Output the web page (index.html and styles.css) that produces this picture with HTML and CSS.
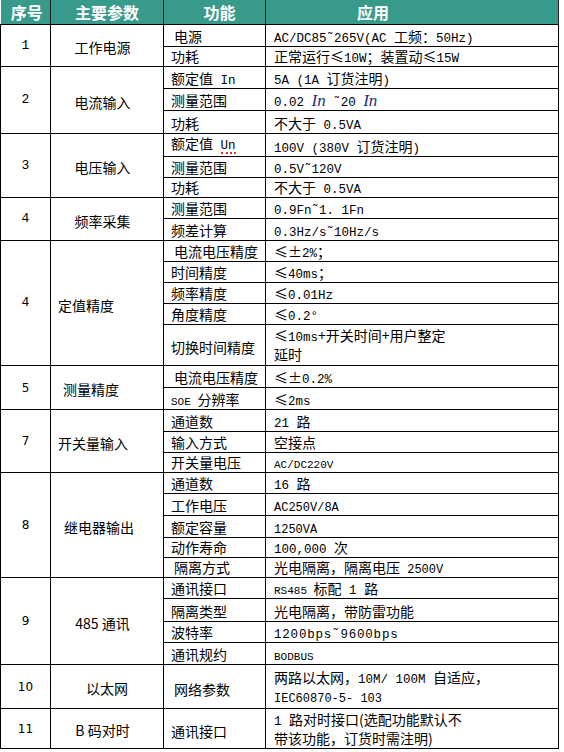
FILE: index.html
```html
<!DOCTYPE html>
<html lang="zh">
<head>
<meta charset="utf-8">
<title>技术参数</title>
<link rel="stylesheet" href="styles.css">
</head>
<body>
<table class="spec">
  <colgroup>
    <col class="c1"><col class="c2"><col class="c3"><col class="c4">
  </colgroup>
  <thead>
    <tr class="head">
      <th class="th-no">序号</th>
      <th>主要参数</th>
      <th class="th-fn">功能</th>
      <th class="th-app">应用</th>
    </tr>
  </thead>
  <tbody>
    <tr class="h22">
      <td rowspan="2" class="no serif">1</td>
      <td rowspan="2" class="name">工作电源</td>
      <td class="fn fn-x">电源</td>
      <td class="app"><span class="en">AC/DC85˜265V(AC </span>工频：<span class="en">50Hz)</span></td>
    </tr>
    <tr class="h20">
      <td class="fn">功耗</td>
      <td class="app">正常运行≤<span class="en">10W</span>；装置动≤<span class="en">15W</span></td>
    </tr>

    <tr class="h22">
      <td rowspan="3" class="no serif">2</td>
      <td rowspan="3" class="name">电流输入</td>
      <td class="fn">额定值<span class="en"> In</span></td>
      <td class="app"><span class="en">5A  (1A </span>订货注明<span class="en">)</span></td>
    </tr>
    <tr class="h22">
      <td class="fn">测量范围</td>
      <td class="app"><span class="en">0.02 </span><span class="math">In</span><span class="en"> ˜20 </span><span class="math">In</span></td>
    </tr>
    <tr class="h23">
      <td class="fn">功耗</td>
      <td class="app">不大于<span class="en"> 0.5VA</span></td>
    </tr>

    <tr class="h23">
      <td rowspan="3" class="no serif">3</td>
      <td rowspan="3" class="name">电压输入</td>
      <td class="fn">额定值<span class="en"> </span><span class="en spell">Un</span></td>
      <td class="app"><span class="en">100V  (380V </span>订货注明<span class="en">)</span></td>
    </tr>
    <tr class="h21">
      <td class="fn">测量范围</td>
      <td class="app"><span class="en">0.5V˜120V</span></td>
    </tr>
    <tr class="h20">
      <td class="fn">功耗</td>
      <td class="app">不大于<span class="en"> 0.5VA</span></td>
    </tr>

    <tr class="h21">
      <td rowspan="2" class="no serif">4</td>
      <td rowspan="2" class="name">频率采集</td>
      <td class="fn">测量范围</td>
      <td class="app"><span class="en">0.9Fn˜1. 1Fn</span></td>
    </tr>
    <tr class="h22">
      <td class="fn">频差计算</td>
      <td class="app"><span class="en">0.3Hz/s˜10Hz/s</span></td>
    </tr>

    <tr class="h21">
      <td rowspan="5" class="no serif">4</td>
      <td rowspan="5" class="name left pl7">定值精度</td>
      <td class="fn fn-x">电流电压精度</td>
      <td class="app">≤±<span class="en">2%</span>；</td>
    </tr>
    <tr class="h21">
      <td class="fn">时间精度</td>
      <td class="app">≤<span class="en">40ms</span>；</td>
    </tr>
    <tr class="h21">
      <td class="fn">频率精度</td>
      <td class="app">≤<span class="en">0.01Hz</span></td>
    </tr>
    <tr class="h21">
      <td class="fn">角度精度</td>
      <td class="app">≤<span class="en">0.2°</span></td>
    </tr>
    <tr class="h41">
      <td class="fn mid">切换时间精度</td>
      <td class="app two">≤<span class="en">10ms</span>+开关时间+用户整定<br>延时</td>
    </tr>

    <tr class="h22">
      <td rowspan="2" class="no sans">5</td>
      <td rowspan="2" class="name left pl12">测量精度</td>
      <td class="fn fn-x">电流电压精度</td>
      <td class="app">≤±<span class="en">0.2%</span></td>
    </tr>
    <tr class="h22">
      <td class="fn"><span class="en sm">SOE </span>分辨率</td>
      <td class="app">≤<span class="en">2ms</span></td>
    </tr>

    <tr class="h22">
      <td rowspan="3" class="no sans">7</td>
      <td rowspan="3" class="name left pl7">开关量输入</td>
      <td class="fn">通道数</td>
      <td class="app"><span class="en">21 </span>路</td>
    </tr>
    <tr class="h21">
      <td class="fn">输入方式</td>
      <td class="app">空接点</td>
    </tr>
    <tr class="h20">
      <td class="fn">开关量电压</td>
      <td class="app"><span class="en sm">AC/DC220V</span></td>
    </tr>

    <tr class="h21">
      <td rowspan="5" class="no sans">8</td>
      <td rowspan="5" class="name left pl13">继电器输出</td>
      <td class="fn">通道数</td>
      <td class="app"><span class="en">16 </span>路</td>
    </tr>
    <tr class="h22">
      <td class="fn">工作电压</td>
      <td class="app"><span class="en md">AC250V/8A</span></td>
    </tr>
    <tr class="h22">
      <td class="fn">额定容量</td>
      <td class="app"><span class="en md">1250VA</span></td>
    </tr>
    <tr class="h20">
      <td class="fn">动作寿命</td>
      <td class="app"><span class="en">100,000 </span>次</td>
    </tr>
    <tr class="h20">
      <td class="fn fn-x">隔离方式</td>
      <td class="app">光电隔离，隔离电压<span class="en md"> 2500V</span></td>
    </tr>

    <tr class="h21">
      <td rowspan="4" class="no sans">9</td>
      <td rowspan="4" class="name">485 通讯</td>
      <td class="fn">通讯接口</td>
      <td class="app"><span class="en sm">RS485 </span>标配<span class="en"> 1 </span>路</td>
    </tr>
    <tr class="h23">
      <td class="fn">隔离类型</td>
      <td class="app">光电隔离，带防雷功能</td>
    </tr>
    <tr class="h21">
      <td class="fn">波特率</td>
      <td class="app"><span class="en wide">1200bps˜9600bps</span></td>
    </tr>
    <tr class="h22">
      <td class="fn">通讯规约</td>
      <td class="app"><span class="en sm">BODBUS</span></td>
    </tr>

    <tr class="h44">
      <td class="no sans">10</td>
      <td class="name center-true">以太网</td>
      <td class="fn mid fn-x">网络参数</td>
      <td class="app two">两路以太网，<span class="en">10M/ 100M </span>自适应，<br><span class="en md">IEC60870-5- 103</span></td>
    </tr>

    <tr class="h40">
      <td class="no sans">11</td>
      <td class="name">B 码对时</td>
      <td class="fn mid">通讯接口</td>
      <td class="app two"><span class="en">1 </span>路对时接口(选配功能默认不<br>带该功能，订货时需注明)</td>
    </tr>
  </tbody>
</table>
</body>
</html>
```

FILE: styles.css
```css
body {
  margin: 0;
  background: #ffffff;
  font-family: "Noto Sans CJK SC", "Noto Sans", sans-serif;
  color: #000;
}

.spec {
  border-collapse: collapse;
  table-layout: fixed;
  width: 558px;
  margin: 0;
}

.c1 { width: 50px; }
.c2 { width: 113px; }
.c3 { width: 102px; }
.c4 { width: 293px; }

.head th {
  height: 23px;
  padding: 0 0 1px 0;
  background: #389a8a;
  color: #ffffff;
  font-size: 16px;
  font-weight: bold;
  line-height: 18px;
  text-align: center;
  border-top: none;
  border-left: 1px solid #222;
  border-right: 1px solid #222;
  border-bottom: 1px solid #000;
}
.head th.th-no { border-left: none; padding-left: 3px; }
.head th.th-fn { padding-left: 10px; }
.head th.th-app { padding-right: 78px; }

.spec td {
  border: 1px solid #000;
  padding: 0;
  font-size: 14px;
  line-height: 16px;
  vertical-align: bottom;
  white-space: nowrap;
}

.h20 { height: 20px; }
.h21 { height: 21px; }
.h22 { height: 22px; }
.h23 { height: 23px; }
.h40 { height: 40px; }
.h41 { height: 41px; }
.h44 { height: 44px; }

.spec td.no {
  text-align: center;
  vertical-align: middle;
  font-size: 13px;
}
.serif { font-family: "Liberation Mono", monospace; }
.spec td.sans { font-family: "DejaVu Sans", sans-serif; font-size: 12px; }

.spec td.name {
  text-align: center;
  vertical-align: middle;
  padding-top: 3px;
  padding-right: 9px;
}
.spec td.name.center-true { padding-right: 0; }
.spec td.name.left { text-align: left; padding-right: 0; }
.spec td.pl7 { padding-left: 7px; }
.spec td.pl12 { padding-left: 12px; }
.spec td.pl13 { padding-left: 13px; }

.spec td.fn { padding-left: 7px; padding-bottom: 2px; }
.spec td.fn-x { padding-left: 10px; }
.spec td.fn.mid { vertical-align: middle; padding-top: 4px; padding-bottom: 0; }

.spec td.app { padding-left: 8px; padding-bottom: 2px; }
.spec td.app.two {
  vertical-align: middle;
  line-height: 19px;
  padding-bottom: 0;
}

.en {
  font-family: "Liberation Mono", monospace;
  font-size: 12.5px;
  line-height: 10px;
}
.en.sm { font-size: 11px; }
.en.md { font-size: 12px; }
.en.wide { letter-spacing: 0.8px; }

.math {
  font-family: "Liberation Serif", serif;
  font-style: italic;
  font-size: 17px;
  line-height: 10px;
  color: #22317a;
}

.spell {
  display: inline-block;
  line-height: 11px;
  border-bottom: 2px dotted #e03030;
}
```
